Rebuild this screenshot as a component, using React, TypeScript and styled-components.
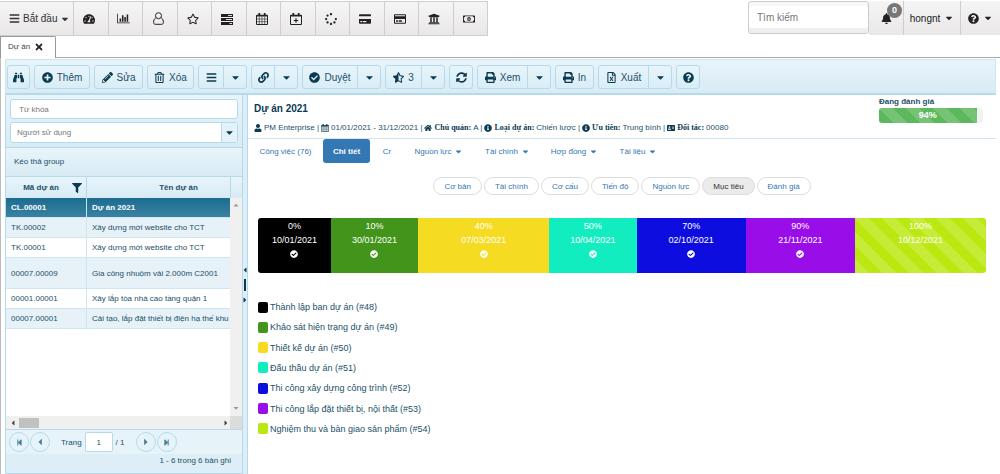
import React from "react";
import styled, { createGlobalStyle, css } from "styled-components";
import {
  FaAddressCard, FaBars, FaBell, FaBinoculars, FaCaretDown, FaCaretLeft, FaCaretRight, FaCaretUp,
  FaCheckCircle, FaCreditCard, FaFilter, FaHome, FaInfoCircle, FaLink, FaPencilAlt, FaPlusCircle,
  FaPrint, FaQuestionCircle, FaRegCreditCard, FaRegFileExcel, FaRegMoneyBillAlt, FaRegStar,
  FaRegTrashAlt, FaSpinner, FaStarHalfAlt, FaStepBackward, FaStepForward, FaSyncAlt,
  FaTachometerAlt, FaTimes, FaUniversity, FaUser,
} from "react-icons/fa";

const ink = "#1d5068";
const deep = "#0c3a52";
const line = "#b5dbea";
const panelFill = "linear-gradient(#e8f4fa, #d8ebf5)";
const link = "#3377b5";

const GlobalStyle = createGlobalStyle`
  *, *::before, *::after { box-sizing: border-box; }
  body { margin: 0; background: #fff; font-family: "Liberation Sans", Arial, sans-serif; font-size: 8px; color: ${ink}; }
  button, input, select { font: inherit; color: inherit; margin: 0; }
  button { cursor: pointer; padding: 0; border: 0; background: none; }
  a { color: inherit; text-decoration: none; }
  svg { display: block; flex: none; }
`;

const Page = styled.div`
  display: flex;
  flex-direction: column;
  min-height: 100vh;
`;

/* ---- top bar ---- */
const TopBar = styled.header`
  display: flex;
  justify-content: space-between;
  height: 36px;
  padding-top: 1px;
`;
const Menu = styled.nav`
  display: flex;
  border: 1px solid #cfcdce;
  border-width: 1px 1px 1px 0;
  background: linear-gradient(#f6f5f5, #e9e7e8);
  color: #222;
`;
const StartButton = styled.button`
  display: flex;
  align-items: center;
  gap: 3px;
  width: 73px;
  padding-left: 9px;
  font-size: 10px;
  white-space: nowrap;
  color: #333;
`;
const IconMenu = styled.div`
  display: flex;
  width: 414px;
`;
const IconButton = styled.button`
  flex: 1;
  display: flex;
  align-items: center;
  justify-content: center;
  padding-right: 3px;
  border-left: 1px solid #cfcdce;
  font-size: 12px;
`;
const UserArea = styled.div`
  display: flex;
  color: #222;
  height: 34px;
`;
const SearchBox = styled.input`
  width: 121px;
  height: 33px;
  padding: 0 8px 1px;
  border: 1px solid #ccc;
  border-radius: 3px;
  box-shadow: inset 0 -5px 0 #eee, inset 0 4px 0 #f8f8f8;
  background: #fff;
  font-size: 10px;
  &::placeholder { color: #777; opacity: 1; }
`;
const UserButton = styled.button<{ $w: number }>`
  position: relative;
  display: flex;
  align-items: center;
  justify-content: center;
  gap: 4px;
  width: ${(p) => p.$w}px;
  background: linear-gradient(#f6f5f5, #e9e7e8);
  font-size: 10px;
  & + & { border-left: 1px solid #cfcdce; }
`;
const Badge = styled.span`
  position: absolute;
  top: 2px;
  right: 1px;
  width: 15px;
  height: 15px;
  border-radius: 8px;
  background: #777;
  color: #fff;
  font-weight: bold;
  font-size: 9px;
  line-height: 15px;
`;

/* ---- document tab and frame ---- */
const TabStrip = styled.div`
  height: 22px;
  border-bottom: 1px solid #aaa;
`;
const DocTab = styled.div`
  display: flex;
  align-items: center;
  gap: 4px;
  width: 56px;
  height: 22px;
  padding: 0 0 2px 7px;
  border: 1px solid #999;
  border-bottom: 0;
  border-top-right-radius: 2px;
  background: #fff;
  color: #444;
  button { color: #222; font-size: 10px; }
`;
const Frame = styled.main`
  flex: 1;
  display: flex;
  flex-direction: column;
  padding: 1px 4px 0;
  border-left: 1px solid #bbb;
`;
const Toolbar = styled.div`
  display: flex;
  flex-wrap: wrap;
  gap: 4px;
  padding: 5px 1px 4px;
  border: 1px solid #cfe6f0;
  border-width: 1px 1px 2px;
  border-bottom-color: ${line};
  background: ${panelFill};
`;
const ButtonGroup = styled.div`
  display: flex;
  height: 24px;
  border: 1px solid ${line};
  border-radius: 3px;
  background: linear-gradient(#e8f5fb, #d9edf6);
`;
const ToolButton = styled.button<{ $w: number }>`
  display: flex;
  align-items: center;
  justify-content: center;
  gap: 4px;
  width: ${(p) => p.$w}px;
  font-size: 10px;
  white-space: nowrap;
  & + & { border-left: 1px solid ${line}; }
  svg { color: ${deep}; font-size: 11px; }
`;

/* ---- split layout ---- */
const Split = styled.div`
  flex: 1;
  display: grid;
  grid-template-columns: 238px 5px minmax(0, 1fr);
`;
const Side = styled.section`
  display: flex;
  flex-direction: column;
  min-width: 0;
  border: 1px solid ${line};
  border-top: 0;
  background: #e3f1f8;
`;
const Filters = styled.form`
  display: flex;
  flex-direction: column;
  gap: 3px;
  padding: 4px;
  border-bottom: 1px solid ${line};
  background: ${panelFill};
`;
const KeywordInput = styled.input`
  height: 20px;
  padding: 0 8px;
  border: 1px solid ${line};
  border-radius: 3px;
  background: #fff;
  &::placeholder { color: #777; opacity: 1; }
`;
const SelectWrap = styled.div`
  display: flex;
  height: 21px;
  border: 1px solid ${line};
  border-radius: 3px;
  background: #fff;
  select { flex: 1; appearance: none; border: 0; background: none; padding: 0 6px; color: #777; }
  span { display: flex; align-items: center; justify-content: center; width: 16px; border-left: 1px solid ${line}; background: #e4f2f9; color: ${deep}; }
`;
const GroupDrop = styled.div`
  height: 29px;
  line-height: 28px;
  padding-left: 8px;
  background: ${panelFill};
  border-bottom: 1px solid ${line};
`;
const GridArea = styled.div`
  flex: 1;
  display: grid;
  grid-template-columns: minmax(0, 1fr) 12px;
  background: #fff;
`;
const TableClip = styled.div`
  overflow: hidden;
  background: #fff;
`;
const Table = styled.table`
  table-layout: fixed;
  width: 265px;
  border-collapse: separate;
  border-spacing: 0;
  th { height: 21px; padding: 0 4px; border-right: 1px solid ${line}; background: ${panelFill}; color: ${ink}; }
  td { padding: 0 5px; border-right: 1px solid #cfe6f0; border-bottom: 1px solid #cfe6f0; white-space: nowrap; }
`;
const HeadLabel = styled.div`
  display: flex;
  align-items: center;
  span { flex: 1; }
  svg { color: ${deep}; font-size: 10px; }
`;
const Row = styled.tr<{ $selected?: boolean; $alt?: boolean; $tall?: boolean }>`
  height: ${(p) => (p.$tall ? 31 : 20)}px;
  background: ${(p) => (p.$alt ? "#e6f1f8" : "#fff")};
  ${(p) => p.$selected && css`
    background: linear-gradient(#1c6c90, #3b83a2);
    color: #fff;
    font-weight: bold;
  `}
`;
const VScroll = styled.div`
  display: flex;
  flex-direction: column;
  justify-content: space-between;
  align-items: center;
  background: #f0f0f0;
  color: #999;
  padding-bottom: 4px;
  &::before { content: ""; width: 12px; height: 21px; background: ${panelFill}; border-left: 1px solid ${line}; }
`;
const ScrollTop = styled.span`
  flex: 1;
  padding-top: 3px;
`;
const HScroll = styled.div`
  display: flex;
  align-items: center;
  height: 13px;
  padding-left: 3px;
  background: #f0f0f0;
  color: #444;
  &::after { content: ""; width: 12px; height: 13px; background: #dcdcdc; }
`;
const Thumb = styled.span`
  width: 20px;
  height: 10px;
  margin: 0 auto 0 2px;
  background: #c1c1c1;
`;
const Pager = styled.div`
  display: flex;
  align-items: center;
  gap: 1px;
  height: 25px;
  padding: 0 3px;
  border-top: 1px solid ${line};
  background: #e6f3f9;
`;
const PageButton = styled.button`
  display: flex;
  align-items: center;
  justify-content: center;
  width: 20px;
  height: 20px;
  border: 1px solid ${line};
  border-radius: 10px;
  color: #4a8099;
  font-size: 7px;
`;
const PageField = styled.label`
  display: flex;
  align-items: center;
  gap: 3px;
  margin: 0 10px;
  input { width: 28px; height: 20px; border: 1px solid ${line}; border-radius: 2px; background: #fff; text-align: center; padding: 0; }
`;
const PageInfo = styled.div`
  height: 19px;
  line-height: 14px;
  padding-right: 11px;
  text-align: right;
  background: #deeef6;
`;
const Splitter = styled.div`
  display: flex;
  flex-direction: column;
  align-items: center;
  justify-content: center;
  gap: 5px;
  background: #ddeef7;
  color: ${deep};
  border-right: 1px solid ${line};
  span { width: 2px; height: 12px; background: ${deep}; }
`;

/* ---- detail ---- */
const Detail = styled.section`
  min-width: 0;
`;
const Summary = styled.div`
  display: flex;
  justify-content: space-between;
  height: 44px;
  padding: 0 13px 0 6px;
  border-bottom: 1px solid #cfe6f0;
`;
const Title = styled.h1`
  margin: 8px 0 0;
  font-size: 10px;
  line-height: 12px;
  color: ${deep};
`;
const Facts = styled.div`
  display: flex;
  align-items: center;
  gap: 2px;
  margin-top: 8px;
  line-height: 10px;
  white-space: nowrap;
  b { font-family: "Liberation Serif", "Times New Roman", serif; color: ${deep}; }
  svg { color: ${deep}; font-size: 8px; }
`;
const Status = styled.div`
  width: 104px;
  padding-top: 1px;
  line-height: 12px;
  font-weight: bold;
`;
const stripes = css`
  background-image: linear-gradient(45deg, rgba(255,255,255,.16) 25%, transparent 25%, transparent 50%, rgba(255,255,255,.16) 50%, rgba(255,255,255,.16) 75%, transparent 75%, transparent);
  background-size: 27px 27px;
`;
const Meter = styled.div`
  height: 15px;
  border-radius: 3px;
  overflow: hidden;
  background: #f2f2f2;
`;
const MeterFill = styled.div`
  height: 15px;
  line-height: 15px;
  background-color: #5cb85c;
  ${stripes}
  text-align: center;
  color: #fff;
  font-size: 9px;
`;
const Tabs = styled.nav`
  display: flex;
`;
const Tab = styled.a<{ $w: number; $active?: boolean }>`
  display: flex;
  align-items: center;
  justify-content: center;
  gap: 3px;
  width: ${(p) => p.$w}px;
  height: 24px;
  white-space: nowrap;
  border-radius: 3px;
  color: ${link};
  ${(p) => p.$active && css`background: ${link}; color: #fff; font-weight: bold;`}
`;
const Pills = styled.div`
  display: flex;
  justify-content: center;
  gap: 2px;
  margin: 14px 0 23px;
`;
const Pill = styled.button<{ $active?: boolean }>`
  height: 18px;
  padding: 0 10px;
  border: 1px solid #ddd;
  border-radius: 9px;
  white-space: nowrap;
  color: ${link};
  ${(p) => p.$active && css`background: #ebebeb; color: #333;`}
`;
const Timeline = styled.div`
  display: flex;
  height: 55px;
  margin: 0 10px;
  border-radius: 3px;
  overflow: hidden;
  font-size: 9px;
`;
const Segment = styled.div<{ $c: string; $striped?: boolean }>`
  display: flex;
  flex-direction: column;
  align-items: center;
  padding-top: 1px;
  line-height: 14px;
  color: #fff;
  background-color: ${(p) => p.$c};
  ${(p) => p.$striped && stripes}
  svg { margin-top: 3px; }
`;
const Legend = styled.ul`
  display: grid;
  height: 142px;
  margin: 24px 0 0 10px;
  padding: 0;
  list-style: none;
  font-size: 9px;
`;
const LegendItem = styled.li<{ $c: string }>`
  display: flex;
  align-items: center;
  gap: 2px;
  &::before { content: ""; width: 10px; height: 11px; border-radius: 2px; background: ${(p) => p.$c}; }
`;

/* ---- drawn icons ---- */
const BarChartIcon = () => (
  <svg width="13" height="11" viewBox="0 0 2048 1792" fill="currentColor"><path d="M640 896v512h-256v-512h256zm384-512v1024h-256v-1024h256zm1024 1152v128h-2048v-1536h128v1408h1920zm-640-896v768h-256v-768h256zm384-384v1152h-256v-1152h256z" /></svg>
);
const PersonIcon = () => (
  <svg width="11" height="13" viewBox="0 0 11 13" fill="none" stroke="currentColor"><circle cx="5.5" cy="3.7" r="3" /><path d="M2.8 5.8C1.2 6.8.6 8.600.6 10.300.6 11.700 1.300 12.300 2.300 12.300H8.700C9.700 12.300 10.400 11.700 10.400 10.300 10.400 8.600 9.800 6.800 8.200 5.800" /></svg>
);
const TasksIcon = () => (
  <svg width="12" height="12" viewBox="0 0 12 12"><path fill="currentColor" d="M0 1h12v3H0zM0 5h12v3H0zM0 9h12v3H0z" /><path stroke="#ddd" d="M7 2.500h4M5 6.500h6M8.500 10.500h2.500" /></svg>
);
const CalendarIcon = ({ size = 12 }: { size?: number }) => (
  <svg width={size} height={size} viewBox="0 0 12 12" fill="none" stroke="currentColor"><path d="M.5 2.500h11v9H.5z" /><path strokeWidth="1.800" d="M.5 2.700h11M3.300 0v3M8.700 0v3" /><path strokeWidth=".6" d="M.5 6h11M.5 8.700h11M3.300 3.500v8M6 3.500v8M8.700 3.500v8" /></svg>
);
const CalendarPlusIcon = () => (
  <svg width="12" height="12" viewBox="0 0 12 12" fill="none" stroke="currentColor"><path d="M.5 2.500h11v9H.5z" /><path strokeWidth="1.800" d="M.5 2.700h11M3.300 0v3M8.700 0v3" /><path strokeWidth="1.200" d="M3.800 7.500h4.400M6 5.300v4.400" /></svg>
);

const menuIcons: [string, React.ReactNode][] = [
  ["Tổng quan", <FaTachometerAlt />], ["Báo cáo", <BarChartIcon />], ["Cá nhân", <PersonIcon />],
  ["Yêu thích", <FaRegStar />], ["Công việc", <TasksIcon />], ["Lịch", <CalendarIcon />],
  ["Thêm lịch", <CalendarPlusIcon />], ["Tiến trình", <FaSpinner />], ["Thẻ", <FaCreditCard />],
  ["Thanh toán", <FaRegCreditCard />], ["Ngân hàng", <FaUniversity />], ["Tiền", <FaRegMoneyBillAlt />],
];

type Tool = { label?: string; name: string; icon: React.ReactNode; w: number; more?: number };
const tools: Tool[] = [
  { name: "Tìm", icon: <FaBinoculars />, w: 21 },
  { name: "Thêm", label: "Thêm", icon: <FaPlusCircle />, w: 54 },
  { name: "Sửa", label: "Sửa", icon: <FaPencilAlt />, w: 47 },
  { name: "Xóa", label: "Xóa", icon: <FaRegTrashAlt />, w: 45 },
  { name: "Danh sách", icon: <FaBars />, w: 24, more: 23 },
  { name: "Liên kết", icon: <FaLink />, w: 22, more: 23 },
  { name: "Duyệt", label: "Duyệt", icon: <FaCheckCircle />, w: 54, more: 23 },
  { name: "Đánh giá", label: "3", icon: <FaStarHalfAlt />, w: 35, more: 23 },
  { name: "Tải lại", icon: <FaSyncAlt />, w: 22 },
  { name: "Xem", label: "Xem", icon: <FaPrint />, w: 49, more: 23 },
  { name: "In", label: "In", icon: <FaPrint />, w: 37 },
  { name: "Xuất", label: "Xuất", icon: <FaRegFileExcel />, w: 49, more: 23 },
  { name: "Trợ giúp", icon: <FaQuestionCircle />, w: 22 },
];

const projects = [
  { code: "CL.00001", name: "Dự án 2021", selected: true },
  { code: "TK.00002", name: "Xây dựng mới website cho TCT", alt: true },
  { code: "TK.00001", name: "Xây dựng mới website cho TCT" },
  { code: "00007.00009", name: "Gia công nhuộm vải 2.000m C2001", alt: true, tall: true },
  { code: "00001.00001", name: "Xây lắp tòa nhà cao tầng quận 1" },
  { code: "00007.00001", name: "Cải tạo, lắp đặt thiết bị điện hạ thế khu", alt: true },
];

const tabs = [
  { label: "Công việc (76)", w: 75 }, { label: "Chi tiết", w: 47, active: true }, { label: "Cr", w: 34 },
  { label: "Nguồn lực", w: 70, menu: true }, { label: "Tài chính", w: 67, menu: true },
  { label: "Hợp đồng", w: 67, menu: true }, { label: "Tài liệu", w: 61, menu: true },
];
const pills = ["Cơ bản", "Tài chính", "Cơ cấu", "Tiến độ", "Nguồn lực", "Mục tiêu", "Đánh giá"];

const milestones = [
  { pct: "0%", date: "10/01/2021", share: 10, color: "#000000", label: "Thành lập ban dự án (#48)", done: true },
  { pct: "10%", date: "30/01/2021", share: 12, color: "#42941a", label: "Khảo sát hiện trạng dự án (#49)", done: true },
  { pct: "40%", date: "07/03/2021", share: 18, color: "#f5db22", label: "Thiết kế dự án (#50)", done: true },
  { pct: "50%", date: "10/04/2021", share: 12, color: "#12edbf", label: "Đấu thầu dự án (#51)", done: true },
  { pct: "70%", date: "02/10/2021", share: 15, color: "#0d0de0", label: "Thi công xây dựng công trình (#52)", done: true },
  { pct: "90%", date: "21/11/2021", share: 15, color: "#980de8", label: "Thi công lắp đặt thiết bị, nội thất (#53)", done: true },
  { pct: "100%", date: "10/12/2021", share: 18, color: "#bce812", label: "Nghiệm thu và bàn giao sản phẩm (#54)" },
];

export default function App() {
  return (
    <Page>
      <GlobalStyle />
      <TopBar>
        <Menu>
          <StartButton><FaBars size={11} />Bắt đầu<FaCaretDown size={10} /></StartButton>
          <IconMenu>
            {menuIcons.map(([name, icon]) => <IconButton key={name} aria-label={name}>{icon}</IconButton>)}
          </IconMenu>
        </Menu>
        <UserArea>
          <SearchBox aria-label="Tìm kiếm" placeholder="Tìm kiếm" />
          <UserButton $w={34} aria-label="Thông báo"><FaBell size={11} /><Badge>0</Badge></UserButton>
          <UserButton $w={57}>hongnt<FaCaretDown /></UserButton>
          <UserButton $w={40} aria-label="Trợ giúp"><FaQuestionCircle size={11} /><FaCaretDown /></UserButton>
        </UserArea>
      </TopBar>
      <TabStrip>
        <DocTab>Dự án<button aria-label="Đóng"><FaTimes /></button></DocTab>
      </TabStrip>
      <Frame>
        <Toolbar>
          {tools.map((t) => (
            <ButtonGroup key={t.name}>
              <ToolButton $w={t.w} aria-label={t.name}>{t.icon}{t.label}</ToolButton>
              {t.more && <ToolButton $w={t.more} aria-label={`${t.name} - thêm`}><FaCaretDown /></ToolButton>}
            </ButtonGroup>
          ))}
        </Toolbar>
        <Split>
          <Side>
            <Filters>
              <KeywordInput aria-label="Từ khóa" placeholder="Từ khóa" />
              <SelectWrap>
                <select aria-label="Người sử dụng"><option>Người sử dụng</option></select>
                <span><FaCaretDown size={11} /></span>
              </SelectWrap>
            </Filters>
            <GroupDrop>Kéo thả group</GroupDrop>
            <GridArea>
              <TableClip>
                <Table>
                  <colgroup><col width="81" /><col width="184" /></colgroup>
                  <thead>
                    <tr>
                      <th><HeadLabel><span>Mã dự án</span><FaFilter /></HeadLabel></th>
                      <th>Tên dự án</th>
                    </tr>
                  </thead>
                  <tbody>
                    {projects.map((p) => (
                      <Row key={p.code} $selected={p.selected} $alt={p.alt} $tall={p.tall}>
                        <td>{p.code}</td><td>{p.name}</td>
                      </Row>
                    ))}
                  </tbody>
                </Table>
              </TableClip>
              <VScroll><ScrollTop><FaCaretUp /></ScrollTop><FaCaretDown /></VScroll>
            </GridArea>
            <HScroll><FaCaretLeft /><Thumb /><FaCaretRight /></HScroll>
            <Pager>
              <PageButton aria-label="Trang đầu"><FaStepBackward /></PageButton>
              <PageButton aria-label="Trang trước"><FaCaretLeft size={10} /></PageButton>
              <PageField>Trang<input defaultValue="1" />/ 1</PageField>
              <PageButton aria-label="Trang sau"><FaCaretRight size={10} /></PageButton>
              <PageButton aria-label="Trang cuối"><FaStepForward /></PageButton>
            </Pager>
            <PageInfo>1 - 6 trong 6 bản ghi</PageInfo>
          </Side>
          <Splitter><FaCaretLeft /><span /><FaCaretRight /></Splitter>
          <Detail>
            <Summary>
              <div>
                <Title>Dự án 2021</Title>
                <Facts>
                  <FaUser />PM Enterprise | <CalendarIcon size={8} />01/01/2021 - 31/12/2021 | <FaHome /><b>Chủ quản:</b> A | <FaInfoCircle /><b>Loại dự án:</b> Chiến lược | <FaInfoCircle /><b>Ưu tiên:</b> Trung bình | <FaAddressCard /><b>Đối tác:</b> 00080
                </Facts>
              </div>
              <Status>
                Đang đánh giá
                <Meter><MeterFill style={{ width: "94%" }}>94%</MeterFill></Meter>
              </Status>
            </Summary>
            <Tabs>
              {tabs.map((t) => (
                <Tab key={t.label} href="#" $w={t.w} $active={t.active}>{t.label}{t.menu && <FaCaretDown size={9} />}</Tab>
              ))}
            </Tabs>
            <Pills>
              {pills.map((p) => <Pill key={p} $active={p === "Mục tiêu"}>{p}</Pill>)}
            </Pills>
            <Timeline>
              {milestones.map((m) => (
                <Segment key={m.pct} $c={m.color} $striped={!m.done} style={{ width: `${m.share}%` }}>
                  <span>{m.pct}</span><span>{m.date}</span>{m.done && <FaCheckCircle size={8} />}
                </Segment>
              ))}
            </Timeline>
            <Legend>
              {milestones.map((m) => <LegendItem key={m.label} $c={m.color}>{m.label}</LegendItem>)}
            </Legend>
          </Detail>
        </Split>
      </Frame>
    </Page>
  );
}
